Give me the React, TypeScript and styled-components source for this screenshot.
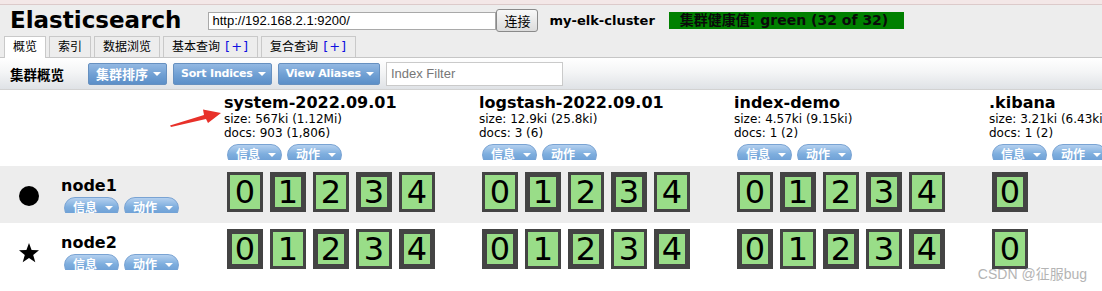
import React from "react";
import styled, { createGlobalStyle } from "styled-components";

const SANS = `"DejaVu Sans", "Noto Sans CJK SC", sans-serif`;
const ARIAL = `"Liberation Sans", "Noto Sans CJK SC", sans-serif`;

const GlobalStyle = createGlobalStyle`
  html, body {
    margin: 0;
    padding: 0;
    background: #fff;
    overflow: hidden;
  }
  body {
    font-family: ${SANS};
    color: #000;
  }
`;

const Page = styled.div`
  position: relative;
  width: 1102px;
  height: 291px;
  overflow: hidden;
`;

const TopStrip = styled.div`
  height: 4px;
  background: #f3e7e7;
  border-bottom: 1px solid #dccaca;
`;

const Header = styled.div`
  background: #ededed;
`;

const TitleBar = styled.div`
  display: flex;
  align-items: center;
  height: 31px;
  padding-left: 10px;
`;

const Title = styled.h1`
  margin: 0;
  font: bold 23px/31px ${SANS};
`;

const UrlInput = styled.input`
  margin-left: 27px;
  width: 288px;
  height: 18px;
  box-sizing: border-box;
  border: 1px solid #a9a9a9;
  padding: 0 3px;
  font: 13px ${ARIAL};
  color: #000;
  background: #fff;
`;

const ConnectButton = styled.button`
  width: 42px;
  height: 23px;
  box-sizing: border-box;
  border: 1px solid #8a8a8a;
  border-radius: 3px;
  background: linear-gradient(#f8f8f8, #dcdcdc);
  font: 13px ${SANS};
  color: #000;
  padding: 0;
`;

const ClusterName = styled.span`
  margin-left: 11px;
  font: bold 13px ${SANS};
`;

const Health = styled.span<{ $status: string }>`
  margin-left: 14px;
  height: 17px;
  padding: 0 16px 0 11px;
  background: ${(p) => (p.$status === "green" ? "#008000" : "#d0a000")};
  color: #0a0a0a;
  font: bold 14px/17px ${SANS};
  white-space: nowrap;
`;

const Tabs = styled.div`
  display: flex;
  align-items: flex-start;
  height: 21px;
  padding-left: 4px;
  gap: 3px;
`;

const Tab = styled.div<{ $active?: boolean }>`
  position: relative;
  z-index: 1;
  box-sizing: border-box;
  height: ${(p) => (p.$active ? 22 : 21)}px;
  padding: 0 8px;
  border: 1px solid #c9c9c9;
  border-bottom: none;
  background: ${(p) => (p.$active ? "#fff" : "#ededed")};
  font: 12px/20px ${SANS};
  white-space: nowrap;
`;

const Plus = styled.span`
  margin-left: 5px;
  color: #1010e0;
  font-size: 13px;
  letter-spacing: 1px;
`;

const Toolbar = styled.div`
  display: flex;
  align-items: center;
  height: 31px;
  padding-left: 10px;
  border-top: 1px solid #c6c6c6;
  border-bottom: 1px solid #d2d2d2;
  background: linear-gradient(#ffffff, #f4f5f6 45%, #dfe2e6);
`;

const ToolbarLabel = styled.span`
  font: bold 13.5px ${SANS};
  margin-right: 24px;
`;

const BlueButton = styled.button<{ $cjk?: boolean }>`
  display: flex;
  align-items: center;
  gap: 5px;
  height: 22px;
  margin-right: 6px;
  padding: 0 5px 0 7px;
  box-sizing: border-box;
  border: 1px solid #6690c0;
  border-radius: 2px;
  background: linear-gradient(#93b8e2, #6f9fd3 55%, #5c8fc8);
  color: #fff;
  font: bold ${(p) => (p.$cjk ? 13 : 11)}px ${SANS};
  letter-spacing: ${(p) => (p.$cjk ? 0 : -0.2)}px;
  white-space: nowrap;
`;

const Caret = styled.span`
  flex: none;
  width: 0;
  height: 0;
  border-left: 4px solid transparent;
  border-right: 4px solid transparent;
  border-top: 4px solid #fff;
`;

const FilterInput = styled.input`
  width: 177px;
  height: 24px;
  box-sizing: border-box;
  border: 1px solid #cacaca;
  padding: 0 4px;
  font: 13px ${ARIAL};
  background: #fff;
  &::placeholder {
    color: #777;
  }
`;

const Row = styled.div<{ $shade?: boolean; $height: number }>`
  display: grid;
  grid-template-columns: 224px repeat(4, 255px);
  height: ${(p) => p.$height}px;
  background: ${(p) => (p.$shade ? "#ededed" : "#fff")};
  width: max-content;
`;

const IndexHead = styled.div`
  padding-top: 3px;
  white-space: nowrap;
`;

const IndexName = styled.div`
  font: bold 16px/19px ${SANS};
`;

const Stat = styled.div`
  font: 12px/14px ${SANS};
`;

const PillClip = styled.div<{ $top: number }>`
  display: flex;
  gap: 5px;
  width: max-content;
  height: 16px;
  margin: ${(p) => p.$top}px 0 0 3px;
  overflow: hidden;
`;

const Pill = styled.span`
  display: flex;
  align-items: center;
  gap: 8px;
  flex: none;
  width: 55px;
  height: 22px;
  box-sizing: border-box;
  padding: 0 4px 0 8px;
  border: 1px solid #79a3d3;
  border-radius: 11px;
  background: linear-gradient(#b4d0ef, #7eaede 45%, #6497d0);
  color: #fff;
  font: bold 12px/20px ${SANS};
  white-space: nowrap;
`;

const NodeCell = styled.div`
  display: flex;
  align-items: center;
`;

const NodeIcon = styled.div<{ $shift?: number }>`
  display: flex;
  justify-content: center;
  flex: none;
  width: 58px;
  margin-top: ${(p) => p.$shift ?? 0}px;
`;

const Dot = styled.span`
  width: 20px;
  height: 20px;
  border-radius: 50%;
  background: #000;
`;

const NodeInfo = styled.div`
  flex: none;
  margin-left: 3px;
`;

const NodeName = styled.div`
  font: bold 16px/18px ${SANS};
`;

const ShardCell = styled.div`
  display: flex;
  gap: 7px;
  padding: 6px 0 0 3px;
  align-items: flex-start;
`;

const Shard = styled.div<{ $primary?: boolean }>`
  display: flex;
  align-items: center;
  justify-content: center;
  width: 36px;
  height: 40px;
  box-sizing: border-box;
  border: ${(p) => (p.$primary ? 5 : 3)}px solid #444;
  background: #99dd88;
  font: 32px/1 ${SANS};
  color: #000;
`;

const Arrow = styled.svg`
  position: absolute;
  left: 0;
  top: 0;
  pointer-events: none;
`;

const Watermark = styled.div`
  position: absolute;
  right: 15px;
  top: 266px;
  font: 14px/16px ${ARIAL};
  color: #b4b4b4;
  white-space: nowrap;
`;

type IndexInfo = { name: string; size: string; docs: string; shards: number };

const indices: IndexInfo[] = [
  { name: "system-2022.09.01", size: "567ki (1.12Mi)", docs: "903 (1,806)", shards: 5 },
  { name: "logstash-2022.09.01", size: "12.9ki (25.8ki)", docs: "3 (6)", shards: 5 },
  { name: "index-demo", size: "4.57ki (9.15ki)", docs: "1 (2)", shards: 5 },
  { name: ".kibana", size: "3.21ki (6.43ki)", docs: "1 (2)", shards: 1 },
];

const nodes = [
  { name: "node1", master: false, primaryOdd: true, kibanaPrimary: true },
  { name: "node2", master: true, primaryOdd: false, kibanaPrimary: false },
];

function Pills() {
  return (
    <>
      <Pill>
        信息
        <Caret />
      </Pill>
      <Pill>
        动作
        <Caret />
      </Pill>
    </>
  );
}

function Star() {
  return (
    <svg width="22" height="22" viewBox="0 0 22 22">
      <polygon
        points="11,1 13.6,8 21,8.3 15.2,12.9 17.3,20.2 11,16 4.7,20.2 6.8,12.9 1,8.3 8.4,8"
        fill="#000"
      />
    </svg>
  );
}

export default function App() {
  return (
    <Page>
      <GlobalStyle />
      <TopStrip />
      <Header>
        <TitleBar>
          <Title>Elasticsearch</Title>
          <UrlInput defaultValue="http://192.168.2.1:9200/" />
          <ConnectButton>连接</ConnectButton>
          <ClusterName>my-elk-cluster</ClusterName>
          <Health $status="green">集群健康值: green (32 of 32)</Health>
        </TitleBar>
        <Tabs>
          <Tab $active>概览</Tab>
          <Tab>索引</Tab>
          <Tab>数据浏览</Tab>
          <Tab>
            基本查询<Plus>[+]</Plus>
          </Tab>
          <Tab>
            复合查询<Plus>[+]</Plus>
          </Tab>
        </Tabs>
      </Header>
      <Toolbar>
        <ToolbarLabel>集群概览</ToolbarLabel>
        <BlueButton $cjk>
          集群排序
          <Caret />
        </BlueButton>
        <BlueButton>
          Sort Indices
          <Caret />
        </BlueButton>
        <BlueButton>
          View Aliases
          <Caret />
        </BlueButton>
        <FilterInput placeholder="Index Filter" />
      </Toolbar>

      <Row $height={76}>
        <div />
        {indices.map((ix) => (
          <IndexHead key={ix.name}>
            <IndexName>{ix.name}</IndexName>
            <Stat>size: {ix.size}</Stat>
            <Stat>docs: {ix.docs}</Stat>
            <PillClip $top={4}>
              <Pills />
            </PillClip>
          </IndexHead>
        ))}
      </Row>

      {nodes.map((node, n) => (
        <Row key={node.name} $height={57} $shade={n === 0}>
          <NodeCell>
            <NodeIcon $shift={node.master ? 3 : 2}>{node.master ? <Star /> : <Dot />}</NodeIcon>
            <NodeInfo>
              <NodeName>{node.name}</NodeName>
              <PillClip $top={2}>
                <Pills />
              </PillClip>
            </NodeInfo>
          </NodeCell>
          {indices.map((ix) => (
            <ShardCell key={ix.name}>
              {Array.from({ length: ix.shards }, (_, i) => {
                const primary =
                  ix.shards === 1 ? node.kibanaPrimary : node.primaryOdd ? i % 2 === 1 : i % 2 === 0;
                return (
                  <Shard key={i} $primary={primary}>
                    {i}
                  </Shard>
                );
              })}
            </ShardCell>
          ))}
        </Row>
      ))}

      <Arrow width="1102" height="291" viewBox="0 0 1102 291">
        <polygon
          points="170,125.5 204,115 203,109.5 221,113 208,123 206,119 171,127"
          fill="#e8312a"
        />
      </Arrow>
      <Watermark>CSDN @征服bug</Watermark>
    </Page>
  );
}
